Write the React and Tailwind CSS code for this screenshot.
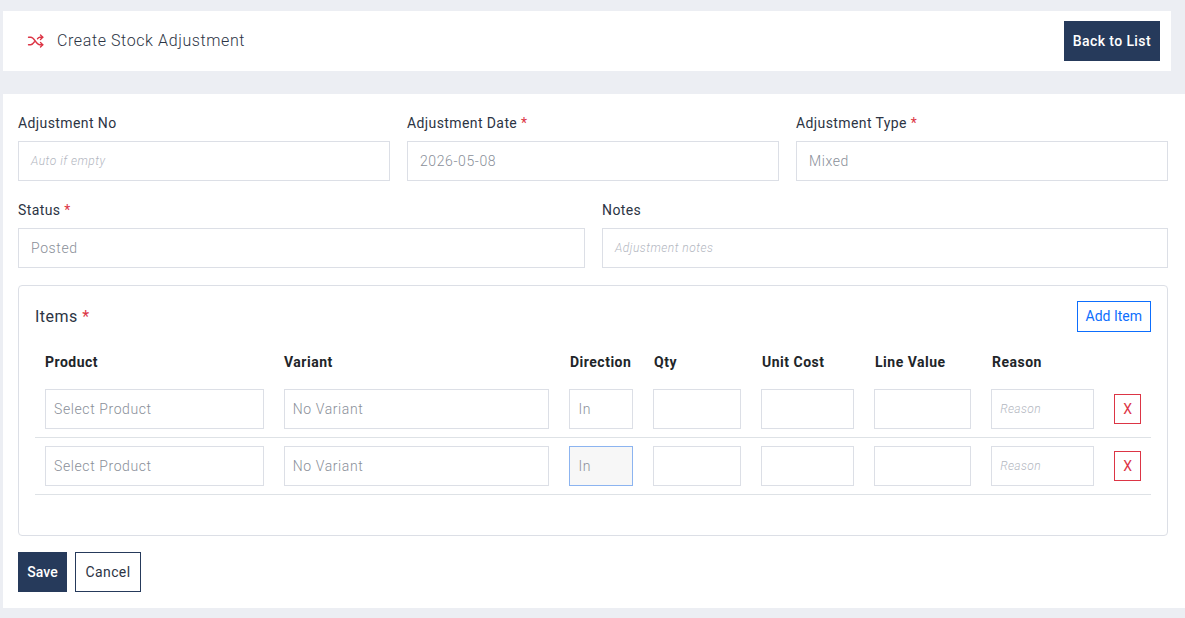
import React from 'react'

const font = { fontFamily: 'Roboto, "Liberation Sans", sans-serif' }

const cols = [
  { label: 'Product', w: 'w-[239px]', ph: 'Select Product' },
  { label: 'Variant', w: 'w-[286px]', ph: 'No Variant' },
  { label: 'Direction', w: 'w-[84px]', ph: 'In' },
  { label: 'Qty', w: 'w-[108px]', ph: '' },
  { label: 'Unit Cost', w: 'w-[113px]', ph: '' },
  { label: 'Line Value', w: 'w-[117px]', ph: '' },
  { label: 'Reason', w: 'w-[123px]', ph: 'Reason', italic: true },
]

function Field({ label, required, ph, value, italic, cls }) {
  return (
    <div className={cls}>
      <div className="text-[14px] text-[#2c3444] tracking-[0.4px] h-[19px] mb-[9px]">
        {label}
        {required && <span className="text-[#dc3545]"> *</span>}
      </div>
      <div className="h-[40px] border border-[#dcdfe6] px-[12px] flex items-center text-[14px]">
        {value ? (
          <span className="text-[#8a8f99] font-light tracking-[0.6px]">{value}</span>
        ) : (
          <span className={`text-[#b3b7bf] font-light text-[12px] tracking-[0.5px] ${italic ? 'italic' : ''}`}>{ph}</span>
        )}
      </div>
    </div>
  )
}

function Row({ focus }) {
  return (
    <div className="flex items-center h-[57px] border-b border-[#dee2e6]">
      {cols.map((c, i) => (
        <div key={i} className={`${c.w} px-[10px]`}>
          <div
            className={`h-[40px] border flex items-center px-[8px] font-light ${
              i === 2 && focus ? 'border-[#8cb4f0] bg-[#f7f7f7]' : 'border-[#dcdfe6]'
            } ${c.italic ? 'italic text-[12px] text-[#b3b7bf] tracking-[0.4px]' : 'text-[14px] text-[#8a8f99] tracking-[0.6px]'}`}
          >
            {c.ph}
          </div>
        </div>
      ))}
      <div className="px-[10px]">
        <div className="w-[27px] h-[30px] border border-[#dc3545] text-[#dc3545] text-[14px] flex items-center justify-center">X</div>
      </div>
    </div>
  )
}

export default function App() {
  return (
    <div style={font} className="bg-[#eceef3] w-[1185px] h-[618px] pt-[11px] pl-[3px] overflow-hidden">
      <div className="w-[1168px] h-[60px] bg-white flex items-center justify-between pl-[24px] pr-[11px]">
        <div className="flex items-center gap-[12px]">
          <svg width="18" height="18" viewBox="0 0 24 24" fill="none" stroke="#dc3545" strokeWidth="1.8" strokeLinecap="round" strokeLinejoin="round">
            <path d="M2 7h3c5 0 7 10 12 10h4" />
            <path d="M18 14l3 3-3 3" />
            <path d="M2 17h3c2 0 3.5-2 5-4" />
            <path d="M14 9c1-1.2 2-2 3-2h4" />
            <path d="M18 4l3 3-3 3" />
          </svg>
          <span className="text-[16px] font-light text-[#2c3444] tracking-[0.6px]">Create Stock Adjustment</span>
        </div>
        <button className="h-[40px] px-[9px] bg-[#263a5b] text-white text-[14px] font-medium tracking-[0.4px]">Back to List</button>
      </div>

      <div className="mt-[23px] w-[1182px] h-[514px] bg-white pl-[15px] pr-[17px] pt-[19px]">
        <div className="flex gap-[17px]">
          <Field cls="w-[372px]" label="Adjustment No" ph="Auto if empty" italic />
          <Field cls="w-[372px]" label="Adjustment Date" required value="2026-05-08" />
          <Field cls="w-[372px]" label="Adjustment Type" required value="Mixed" />
        </div>
        <div className="flex gap-[17px] mt-[19px]">
          <Field cls="w-[567px]" label="Status" required value="Posted" />
          <Field cls="w-[566px]" label="Notes" ph="Adjustment notes" italic />
        </div>

        <div className="mt-[17px] w-[1150px] h-[251px] border border-[#dcdfe6] rounded-[4px] px-[16px] pt-[15px]">
          <div className="flex items-center justify-between h-[31px]">
            <div className="text-[16px] text-[#2c3444] tracking-[0.5px]">
              Items <span className="text-[#dc3545]">*</span>
            </div>
            <button className="h-[31px] px-[8px] border border-[#0d6efd] text-[#0d6efd] text-[14px]">Add Item</button>
          </div>
          <div className="flex mt-[20px] h-[29px] items-start">
            {cols.map((c, i) => (
              <div key={i} className={`${c.w} px-[10px] text-[14px] font-bold text-[#212529] tracking-[0.5px]`}>{c.label}</div>
            ))}
          </div>
          <Row />
          <Row focus />
        </div>

        <div className="flex gap-[8px] mt-[16px]">
          <button className="h-[40px] w-[49px] bg-[#263a5b] text-white text-[14px] font-medium">Save</button>
          <button className="h-[40px] w-[66px] border border-[#263a5b] text-[#2c3444] text-[14px] tracking-[0.4px]">Cancel</button>
        </div>
      </div>
    </div>
  )
}
